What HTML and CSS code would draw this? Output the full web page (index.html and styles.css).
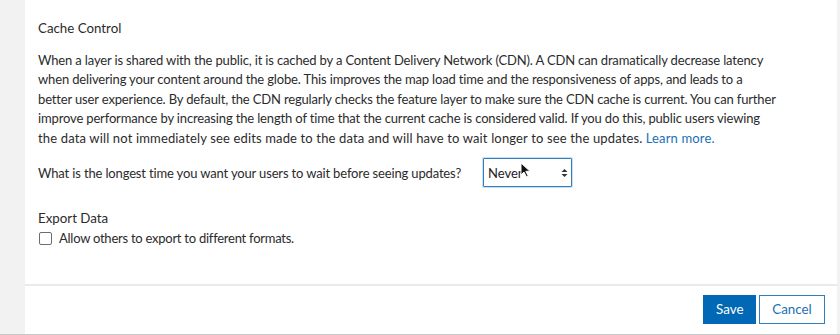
FILE: index.html
```html
<!DOCTYPE html>
<html lang="en">

<head>
    <meta charset="UTF-8" />
    <title>Cache Control</title>
    <link rel="stylesheet" href="styles.css">
</head>

<body>
    <div class="page">
        <div class="rail"></div>
        <div class="panel">
            <div class="content">
                <h3 class="section-title">Cache Control</h3>
                <p class="description">
                    When a layer is shared with the public, it is cached by a Content Delivery Network (CDN). A CDN can dramatically decrease latency<br>
                    when delivering your content around the globe. This improves the map load time and the responsiveness of apps, and leads to a<br>
                    better user experience. By default, the CDN regularly checks the feature layer to make sure the CDN cache is current. You can further<br>
                    improve performance by increasing the length of time that the current cache is considered valid. If you do this, public users viewing<br>
                    <span class="last-line">the data will not immediately see edits made to the data and will have to wait longer to see the updates.</span> <a href="#" class="link">Learn more.</a>
                </p>

                <div class="question">
                    <label for="maxAge" class="question-label">What is the longest time you want your users to wait before seeing updates?</label>
                    <div class="select-wrap">
                        <select id="maxAge" class="select">
                            <option>Never</option>
                        </select>
                        <svg class="select-arrows" width="7" height="10" viewBox="0 0 7 10">
                            <path d="M0.5 4 L3.5 1 L6.5 4 Z M0.5 6 L3.5 9 L6.5 6 Z" fill="#333" />
                        </svg>
                        <!-- mouse pointer in the capture -->
                        <svg class="cursor" width="11" height="16" viewBox="0 0 11 16">
                            <path d="M1 1 L1 13 L4 10 L6.5 15 L8.3 14.2 L5.8 9.3 L10 9.3 Z" fill="#111" stroke="#fff" stroke-width="1" />
                        </svg>
                    </div>
                </div>

                <h3 class="section-title export-title">Export Data</h3>
                <label class="check">
                    <span class="box"></span>
                    Allow others to export to different formats.
                </label>
            </div>

            <div class="footer">
                <button class="btn btn-primary">Save</button>
                <button class="btn btn-clear">Cancel</button>
            </div>
        </div>
        <div class="edge"></div>
    </div>
</body>

</html>
```

FILE: styles.css
```css
* {
    box-sizing: border-box;
}

body {
    margin: 0;
    font-family: 'Lato', 'Noto Sans', sans-serif;
    font-size: 13px;
    color: #2b2b2b;
    background-color: #f3f3f3;
}

.page {
    display: flex;
    height: 335px;
    border-bottom: 1px solid #c8c8c8;
}

.rail {
    width: 25px;
    background-color: #f2f2f2;
}

.edge {
    width: 3px;
    background-color: #f2f2f2;
}

.panel {
    flex: 1;
    background-color: #ffffff;
    display: flex;
    flex-direction: column;
}

.content {
    flex: 1;
    padding: 18px 10px 0 13px;
    border-bottom: 2px solid #eaeaea;
}

.section-title {
    margin: 0;
    font-size: 13.3px;
    font-weight: 400;
    line-height: 20px;
}

.description {
    margin: 13px 0 0;
    line-height: 19.4px;
    letter-spacing: -0.15px;
    white-space: nowrap;
}

.last-line {
    letter-spacing: 0.15px;
}

.link {
    color: #1b6fb4;
    text-decoration: none;
    letter-spacing: 0.15px;
}

.question {
    display: flex;
    align-items: center;
    margin-top: 10px;
}

.question-label {
    width: 445px;
    letter-spacing: -0.15px;
}

.select-wrap {
    position: relative;
}

.select {
    appearance: none;
    display: block;
    width: 89px;
    height: 29px;
    padding: 0 0 0 4px;
    border: 1px solid #2f7fc1;
    border-radius: 1px;
    background: #fff;
    font-family: inherit;
    font-size: 13px;
    color: #222;
    box-shadow: 0 0 0 1px rgba(47, 127, 193, 0.25);
}

.select-arrows {
    position: absolute;
    right: 4px;
    top: 10px;
    pointer-events: none;
}

.cursor {
    position: absolute;
    left: 37px;
    top: 4px;
}

.export-title {
    margin-top: 21px;
}

.check {
    display: flex;
    align-items: center;
    gap: 7px;
    margin-top: 0;
    line-height: 20px;
    letter-spacing: -0.25px;
}

.box {
    width: 13px;
    height: 13px;
    border: 1px solid #6e6e6e;
    border-radius: 2px;
    margin-left: 1px;
}

.footer {
    height: 48px;
    display: flex;
    justify-content: flex-end;
    align-items: center;
    gap: 3px;
    padding: 0 12px 2px 0;
}

.btn {
    height: 29px;
    padding: 0 12px;
    font-family: inherit;
    font-size: 13.4px;
    border-radius: 0;
    cursor: pointer;
}

.btn-primary {
    width: 53px;
    background-color: #0068b4;
    border: 1px solid #0068b4;
    color: #fff;
}

.btn-clear {
    width: 66px;
    background-color: #fff;
    border: 1px solid #2d80c3;
    color: #1b6fb4;
}
```
